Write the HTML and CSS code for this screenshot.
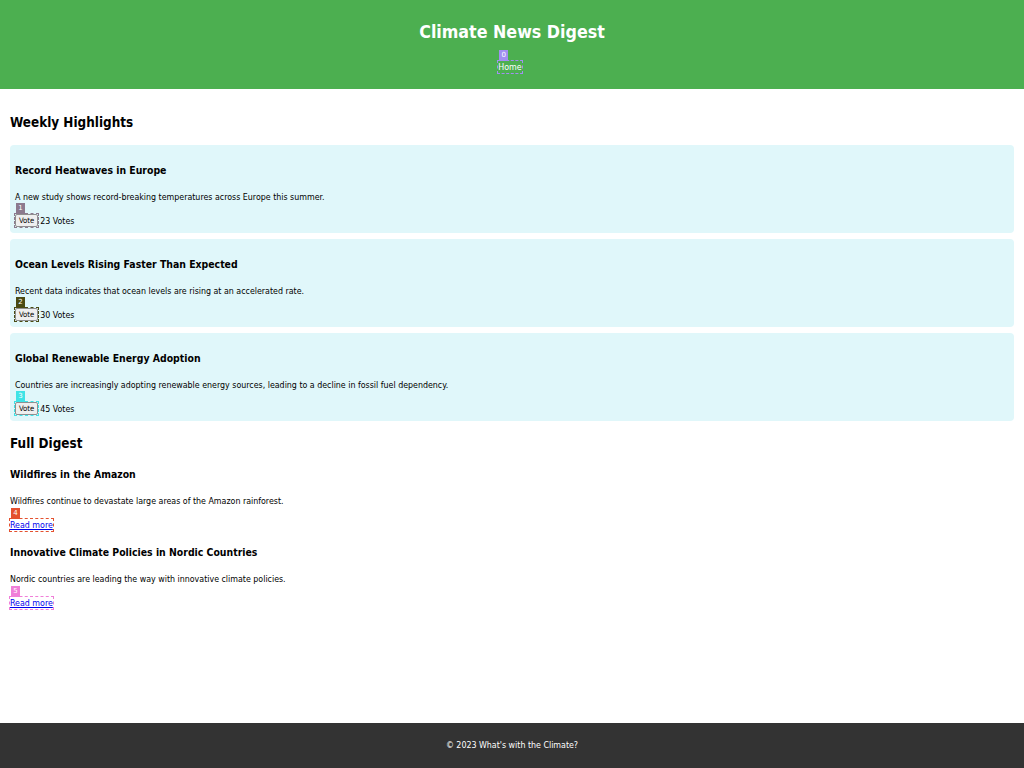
FILE: index.html
```html
<!DOCTYPE html>
<html lang="en">
<head>
<meta charset="utf-8">
<title>Climate News Digest</title>
<link rel="stylesheet" href="styles.css">
</head>
<body>
<header class="site-header">
  <h1 class="site-title">Climate News Digest</h1>
  <nav class="nav">
    <span class="mark mark-0"><a class="nav-link" href="#">Home</a><span class="badge">0</span></span>
  </nav>
</header>
<main class="main">
  <h2 class="section-title first">Weekly Highlights</h2>
  <article class="card">
    <h3 class="card-title">Record Heatwaves in Europe</h3>
    <p class="card-text">A new study shows record-breaking temperatures across Europe this summer.</p>
    <div class="vote-row"><span class="mark mark-1"><button class="vote-btn">Vote</button><span class="badge">1</span></span> <span class="votes">23 Votes</span></div>
  </article>
  <article class="card">
    <h3 class="card-title">Ocean Levels Rising Faster Than Expected</h3>
    <p class="card-text">Recent data indicates that ocean levels are rising at an accelerated rate.</p>
    <div class="vote-row"><span class="mark mark-2"><button class="vote-btn">Vote</button><span class="badge">2</span></span> <span class="votes">30 Votes</span></div>
  </article>
  <article class="card">
    <h3 class="card-title">Global Renewable Energy Adoption</h3>
    <p class="card-text">Countries are increasingly adopting renewable energy sources, leading to a decline in fossil fuel dependency.</p>
    <div class="vote-row"><span class="mark mark-3"><button class="vote-btn">Vote</button><span class="badge">3</span></span> <span class="votes">45 Votes</span></div>
  </article>

  <h2 class="section-title second">Full Digest</h2>
  <article class="digest">
    <h3 class="digest-title">Wildfires in the Amazon</h3>
    <p class="digest-text">Wildfires continue to devastate large areas of the Amazon rainforest.</p>
    <div class="more-row"><span class="mark mark-4"><a class="more-link" href="#">Read more</a><span class="badge">4</span></span></div>
  </article>
  <article class="digest">
    <h3 class="digest-title">Innovative Climate Policies in Nordic Countries</h3>
    <p class="digest-text">Nordic countries are leading the way with innovative climate policies.</p>
    <div class="more-row"><span class="mark mark-5"><a class="more-link" href="#">Read more</a><span class="badge">5</span></span></div>
  </article>
</main>
<footer class="site-footer">© 2023 What's with the Climate?</footer>
</body>
</html>
```

FILE: styles.css
```css
html, body {
  margin: 0;
  padding: 0;
}
body {
  height: 768px;
  display: flex;
  flex-direction: column;
  font-family: "DejaVu Sans Condensed", "DejaVu Sans", sans-serif;
  font-stretch: condensed;
  font-size: 8.8px;
  color: #000;
  background: #fff;
}
.site-header {
  background: #4caf50;
  color: #fff;
  text-align: center;
  height: 89px;
  box-sizing: border-box;
  padding-top: 21px;
}
.site-title {
  margin: 0;
  font-size: 17.7px;
  line-height: 22px;
  font-weight: bold;
}
.nav {
  margin-top: 18px;
  line-height: 12px;
  font-size: 8.8px;
  padding-right: 4px;
}
.nav-link {
  color: #fff;
  text-decoration: none;
}
.main {
  padding: 0 10px;
}
.section-title {
  font-size: 13.4px;
  line-height: 16px;
  margin: 0;
  font-weight: bold;
}
.section-title.first {
  margin-top: 26px;
  margin-bottom: 14px;
}
.section-title.second {
  margin-top: 15px;
}
.card {
  background: #e0f7fa;
  border-radius: 4px;
  padding: 0 5px 6px;
  margin-bottom: 6px;
}
.card-title, .digest-title {
  font-size: 10.4px;
  line-height: 14px;
  margin: 0;
  font-weight: bold;
}
.card-title {
  padding-top: 18px;
}
.card-text, .digest-text {
  margin: 14px 0 0;
  line-height: 12px;
}
.vote-row {
  margin-top: 11px;
  height: 13px;
  display: flex;
  align-items: center;
  gap: 2px;
}
.vote-btn {
  font-family: "DejaVu Sans Condensed", "DejaVu Sans", sans-serif;
  font-stretch: condensed;
  font-size: 7.6px;
  height: 13px;
  padding: 0 3px;
  line-height: 11px;
  background: #efefef;
  border: 1px solid #8f8f8f;
  border-radius: 2px;
  color: #000;
  display: block;
}
.votes {
  line-height: 12px;
}
.digest {
  margin-top: 15px;
}
.digest + .digest {
  margin-top: 14px;
}
.more-row {
  margin-top: 12px;
  line-height: 12px;
}
.more-link {
  color: #0000ee;
  text-decoration: underline;
}
.mark {
  position: relative;
  display: inline-block;
  outline: 1px dashed var(--mk);
  outline-offset: 0;
}
.badge {
  position: absolute;
  left: 1px;
  bottom: 100%;
  min-width: 9px;
  height: 11px;
  padding: 0 1px;
  box-sizing: border-box;
  background: var(--mk);
  color: #fff;
  font-size: 7px;
  line-height: 11px;
  text-align: center;
  font-family: "DejaVu Sans", sans-serif;
  font-stretch: normal;
}
.mark-0 { --mk: #a28ff2; }
.mark-1 { --mk: #8c7a8e; }
.mark-2 { --mk: #4a4a12; }
.mark-3 { --mk: #3fe3e6; }
.mark-4 { --mk: #e4512f; }
.mark-5 { --mk: #f07fd8; }
.site-footer {
  margin-top: auto;
  height: 45px;
  background: #333;
  color: #fff;
  text-align: center;
  line-height: 45px;
  font-size: 8.8px;
}
```
